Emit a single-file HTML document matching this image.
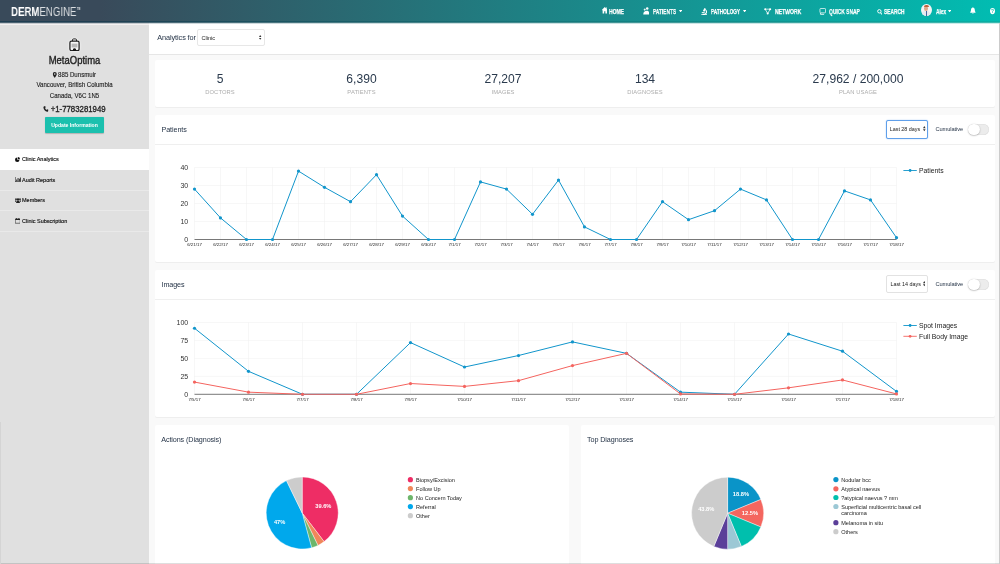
<!DOCTYPE html>
<html lang="en">
<head>
<meta charset="utf-8">
<title>DermEngine - Clinic Analytics</title>
<style>
*{box-sizing:border-box;margin:0;padding:0}
html,body{width:1000px;height:564px;overflow:hidden}
body{position:relative;background:#f9f9f9;font-family:"Liberation Sans",Arial,sans-serif;color:#333}
#app{position:absolute;left:0;top:0;width:1000px;height:564px;overflow:hidden;will-change:transform}
.abs{position:absolute}
#hdr{left:0;top:0;width:1000px;height:22px;background:linear-gradient(to right,#394a5a 0%,#394a5a 10%,#01bdb2 100%)}
#hdr:after{content:'';position:absolute;left:0;top:21px;width:1000px;height:1px;background:linear-gradient(to right,#1f3d50 0%,#1f3d50 10%,#09b0a4 100%)}
.hb{left:0;width:1000px;height:1px;background:linear-gradient(to right,#1f3d50 0%,#1f3d50 10%,#09a89c 100%)}
#hdr .logo{left:11px;top:4.7px;font-size:12px;line-height:14px;color:#fff;letter-spacing:0;white-space:nowrap;transform:scaleX(.805);transform-origin:0 0;will-change:transform}
#hdr .logo b{font-weight:bold}
#hdr .logo span{font-weight:normal;opacity:.82}
#hdr .logo sup{font-size:3px;line-height:3px;vertical-align:top;position:relative;top:2.8px;left:.6px;letter-spacing:0;opacity:.85;font-weight:bold}
.nt{top:6px;font-size:7.3px;line-height:11px;font-weight:bold;color:#fff;white-space:nowrap;transform:scaleX(var(--s));transform-origin:0 50%;-webkit-text-stroke:.25px #fff;will-change:transform}
#side{left:0;top:22px;width:149px;height:542px;background:#e0e0e0;border-top:3px solid #f4f1f1}
.sc{left:0;width:149px;text-align:center;white-space:nowrap;color:#1a1a1a;-webkit-text-stroke:.12px #1a1a1a}
.mi{left:0;width:149px;height:20.5px;line-height:21.5px;font-size:5.5px;color:#111;-webkit-text-stroke:.15px #111;padding-left:22px;white-space:nowrap}
.mi svg{position:absolute;left:14.5px;top:7.5px}
.card{background:#fff;border-radius:2px;box-shadow:0 1px 0 #eeeeee}
.ttl{font-size:7.2px;letter-spacing:-.09px;color:#1f2e42;white-space:nowrap;line-height:10px}
.stat{top:71px;width:142px;text-align:center}
.stat .n{font-size:12.1px;line-height:16px;color:#2a3a4d}
.stat .l{font-size:5.8px;line-height:8px;color:#adadad;margin-top:0.6px;letter-spacing:.1px}
.sel{background:#fff;border:1px solid #dcdcdc;border-radius:2px;font-size:5.6px;color:#222;white-space:nowrap}
.tog{width:20.6px;height:11.8px;border-radius:6px;background:#ececec;box-shadow:inset 0 0 0 .5px #ddd}
.tog i{position:absolute;left:0;top:0;width:11.8px;height:11.8px;border-radius:6px;background:#fff;box-shadow:0 .5px 1.5px rgba(0,0,0,.35)}
svg text{font-family:"Liberation Sans",Arial,sans-serif}
</style>
</head>
<body>
<div id="app">

<!-- main top bar -->
<div class="abs" style="left:149px;top:22px;width:851px;height:32.5px;background:#fff;border-bottom:1px solid #e6e6e6"></div>
<div class="abs ttl" style="left:157.3px;top:32.7px;font-size:7.3px">Analytics for</div>
<div class="abs sel" style="left:197.3px;top:28.9px;width:67.8px;height:17.2px;line-height:16px;padding-left:3.2px;border-color:#e7e7e7">Clinic
  <svg class="abs" style="right:2.6px;top:5.400px" width="2.400" height="4.800" viewBox="0 0 3 6"><path d="M0 2.400 L1.500 0 L3 2.400Z M0 3.600 L1.500 6 L3 3.600Z" fill="#333"/></svg>
</div>

<!-- stats card -->
<div class="abs card" style="left:155px;top:60px;width:840px;height:47px"></div>
<div class="abs stat" style="left:149px"><div class="n">5</div><div class="l">DOCTORS</div></div>
<div class="abs stat" style="left:290.5px"><div class="n">6,390</div><div class="l">PATIENTS</div></div>
<div class="abs stat" style="left:432px"><div class="n">27,207</div><div class="l">IMAGES</div></div>
<div class="abs stat" style="left:574px"><div class="n">134</div><div class="l">DIAGNOSES</div></div>
<div class="abs stat" style="left:716px;width:284px"><div class="n">27,962 / 200,000</div><div class="l">PLAN USAGE</div></div>

<!-- Patients card -->
<div class="abs card" style="left:155px;top:115px;width:840px;height:147px"></div>
<div class="abs" style="left:155px;top:144px;width:840px;height:1px;background:#efefef"></div>
<div class="abs ttl" style="left:161.5px;top:124.9px">Patients</div>
<div class="abs sel" style="left:886.2px;top:120px;width:42px;height:18.800px;line-height:17.600px;padding-left:2.500px;border:1.500px solid #5f9fea;box-shadow:0 0 1.200px #7db3f2;border-radius:2px;font-size:5.4px">Last 28 days
  <svg class="abs" style="right:1.200px;top:5.300px" width="2.600" height="5.400" viewBox="0 0 3 6"><path d="M0 2.400 L1.500 0 L3 2.400Z M0 3.600 L1.500 6 L3 3.600Z" fill="#333"/></svg>
</div>
<div class="abs ttl" style="left:935.5px;top:124px;font-size:5.7px">Cumulative</div>
<div class="abs tog" style="left:968.2px;top:123.6px"><i></i></div>

<!-- Images card -->
<div class="abs card" style="left:155px;top:270px;width:840px;height:146.5px"></div>
<div class="abs" style="left:155px;top:299px;width:840px;height:1px;background:#efefef"></div>
<div class="abs ttl" style="left:161.5px;top:279.9px">Images</div>
<div class="abs sel" style="left:886.4px;top:275.2px;width:41.4px;height:17.6px;line-height:17.600px;padding-left:3px;border:1px solid #e2e2e2;font-size:5.4px">Last 14 days
  <svg class="abs" style="right:1.600px;top:5.200px" width="2.600" height="5.400" viewBox="0 0 3 6"><path d="M0 2.400 L1.500 0 L3 2.400Z M0 3.600 L1.500 6 L3 3.600Z" fill="#333"/></svg>
</div>
<div class="abs ttl" style="left:935.5px;top:279px;font-size:5.7px">Cumulative</div>
<div class="abs tog" style="left:968.2px;top:278.6px"><i></i></div>

<!-- bottom cards -->
<div class="abs card" style="left:155px;top:424.5px;width:414px;height:145px"></div>
<div class="abs ttl" style="left:161.2px;top:434.6px">Actions (Diagnosis)</div>
<div class="abs card" style="left:581px;top:424.5px;width:414px;height:145px"></div>
<div class="abs ttl" style="left:587px;top:434.6px">Top Diagnoses</div>

<!-- charts -->
<svg class="abs" style="left:0;top:0" width="1000" height="564" viewBox="0 0 1000 564">
<line x1="194.5" y1="167.5" x2="194.5" y2="239.5" stroke="#eeeeee" stroke-width="0.5"/>
<line x1="220.5" y1="167.5" x2="220.5" y2="239.5" stroke="#eeeeee" stroke-width="0.5"/>
<line x1="246.5" y1="167.5" x2="246.5" y2="239.5" stroke="#eeeeee" stroke-width="0.5"/>
<line x1="272.5" y1="167.5" x2="272.5" y2="239.5" stroke="#eeeeee" stroke-width="0.5"/>
<line x1="298.5" y1="167.5" x2="298.5" y2="239.5" stroke="#eeeeee" stroke-width="0.5"/>
<line x1="324.5" y1="167.5" x2="324.5" y2="239.5" stroke="#eeeeee" stroke-width="0.5"/>
<line x1="350.5" y1="167.5" x2="350.5" y2="239.5" stroke="#eeeeee" stroke-width="0.5"/>
<line x1="376.5" y1="167.5" x2="376.5" y2="239.5" stroke="#eeeeee" stroke-width="0.5"/>
<line x1="402.5" y1="167.5" x2="402.5" y2="239.5" stroke="#eeeeee" stroke-width="0.5"/>
<line x1="428.5" y1="167.5" x2="428.5" y2="239.5" stroke="#eeeeee" stroke-width="0.5"/>
<line x1="454.5" y1="167.5" x2="454.5" y2="239.5" stroke="#eeeeee" stroke-width="0.5"/>
<line x1="480.5" y1="167.5" x2="480.5" y2="239.5" stroke="#eeeeee" stroke-width="0.5"/>
<line x1="506.5" y1="167.5" x2="506.5" y2="239.5" stroke="#eeeeee" stroke-width="0.5"/>
<line x1="532.5" y1="167.5" x2="532.5" y2="239.5" stroke="#eeeeee" stroke-width="0.5"/>
<line x1="558.5" y1="167.5" x2="558.5" y2="239.5" stroke="#eeeeee" stroke-width="0.5"/>
<line x1="584.5" y1="167.5" x2="584.5" y2="239.5" stroke="#eeeeee" stroke-width="0.5"/>
<line x1="610.5" y1="167.5" x2="610.5" y2="239.5" stroke="#eeeeee" stroke-width="0.5"/>
<line x1="636.5" y1="167.5" x2="636.5" y2="239.5" stroke="#eeeeee" stroke-width="0.5"/>
<line x1="662.5" y1="167.5" x2="662.5" y2="239.5" stroke="#eeeeee" stroke-width="0.5"/>
<line x1="688.5" y1="167.5" x2="688.5" y2="239.5" stroke="#eeeeee" stroke-width="0.5"/>
<line x1="714.5" y1="167.5" x2="714.5" y2="239.5" stroke="#eeeeee" stroke-width="0.5"/>
<line x1="740.5" y1="167.5" x2="740.5" y2="239.5" stroke="#eeeeee" stroke-width="0.5"/>
<line x1="766.5" y1="167.5" x2="766.5" y2="239.5" stroke="#eeeeee" stroke-width="0.5"/>
<line x1="792.5" y1="167.5" x2="792.5" y2="239.5" stroke="#eeeeee" stroke-width="0.5"/>
<line x1="818.5" y1="167.5" x2="818.5" y2="239.5" stroke="#eeeeee" stroke-width="0.5"/>
<line x1="844.5" y1="167.5" x2="844.5" y2="239.5" stroke="#eeeeee" stroke-width="0.5"/>
<line x1="870.5" y1="167.5" x2="870.5" y2="239.5" stroke="#eeeeee" stroke-width="0.5"/>
<line x1="896.5" y1="167.5" x2="896.5" y2="239.5" stroke="#eeeeee" stroke-width="0.5"/>
<text x="188.2" y="241.9" text-anchor="end" font-size="7" fill="#333">0</text>
<line x1="194.5" y1="221.5" x2="896.5" y2="221.5" stroke="#eeeeee" stroke-width="0.5"/>
<text x="188.2" y="223.9" text-anchor="end" font-size="7" fill="#333">10</text>
<line x1="194.5" y1="203.5" x2="896.5" y2="203.5" stroke="#eeeeee" stroke-width="0.5"/>
<text x="188.2" y="205.9" text-anchor="end" font-size="7" fill="#333">20</text>
<line x1="194.5" y1="185.5" x2="896.5" y2="185.5" stroke="#eeeeee" stroke-width="0.5"/>
<text x="188.2" y="187.9" text-anchor="end" font-size="7" fill="#333">30</text>
<line x1="194.5" y1="167.5" x2="896.5" y2="167.5" stroke="#eeeeee" stroke-width="0.5"/>
<text x="188.2" y="169.9" text-anchor="end" font-size="7" fill="#333">40</text>
<line x1="194.5" y1="239.5" x2="896.5" y2="239.5" stroke="#555" stroke-width="0.8"/>
<text x="194.5" y="245.8" text-anchor="middle" font-size="4.4" fill="#222">6/21/17</text>
<text x="220.5" y="245.8" text-anchor="middle" font-size="4.4" fill="#222">6/22/17</text>
<text x="246.5" y="245.8" text-anchor="middle" font-size="4.4" fill="#222">6/23/17</text>
<text x="272.5" y="245.8" text-anchor="middle" font-size="4.4" fill="#222">6/24/17</text>
<text x="298.5" y="245.8" text-anchor="middle" font-size="4.4" fill="#222">6/25/17</text>
<text x="324.5" y="245.8" text-anchor="middle" font-size="4.4" fill="#222">6/26/17</text>
<text x="350.5" y="245.8" text-anchor="middle" font-size="4.4" fill="#222">6/27/17</text>
<text x="376.5" y="245.8" text-anchor="middle" font-size="4.4" fill="#222">6/28/17</text>
<text x="402.5" y="245.8" text-anchor="middle" font-size="4.4" fill="#222">6/29/17</text>
<text x="428.5" y="245.8" text-anchor="middle" font-size="4.4" fill="#222">6/30/17</text>
<text x="454.5" y="245.8" text-anchor="middle" font-size="4.4" fill="#222">7/1/17</text>
<text x="480.5" y="245.8" text-anchor="middle" font-size="4.4" fill="#222">7/2/17</text>
<text x="506.5" y="245.8" text-anchor="middle" font-size="4.4" fill="#222">7/3/17</text>
<text x="532.5" y="245.8" text-anchor="middle" font-size="4.4" fill="#222">7/4/17</text>
<text x="558.5" y="245.8" text-anchor="middle" font-size="4.4" fill="#222">7/5/17</text>
<text x="584.5" y="245.8" text-anchor="middle" font-size="4.4" fill="#222">7/6/17</text>
<text x="610.5" y="245.8" text-anchor="middle" font-size="4.4" fill="#222">7/7/17</text>
<text x="636.5" y="245.8" text-anchor="middle" font-size="4.4" fill="#222">7/8/17</text>
<text x="662.5" y="245.8" text-anchor="middle" font-size="4.4" fill="#222">7/9/17</text>
<text x="688.5" y="245.8" text-anchor="middle" font-size="4.4" fill="#222">7/10/17</text>
<text x="714.5" y="245.8" text-anchor="middle" font-size="4.4" fill="#222">7/11/17</text>
<text x="740.5" y="245.8" text-anchor="middle" font-size="4.4" fill="#222">7/12/17</text>
<text x="766.5" y="245.8" text-anchor="middle" font-size="4.4" fill="#222">7/13/17</text>
<text x="792.5" y="245.8" text-anchor="middle" font-size="4.4" fill="#222">7/14/17</text>
<text x="818.5" y="245.8" text-anchor="middle" font-size="4.4" fill="#222">7/15/17</text>
<text x="844.5" y="245.8" text-anchor="middle" font-size="4.4" fill="#222">7/16/17</text>
<text x="870.5" y="245.8" text-anchor="middle" font-size="4.4" fill="#222">7/17/17</text>
<text x="896.5" y="245.8" text-anchor="middle" font-size="4.4" fill="#222">7/18/17</text>
<polyline points="194.5,189.1 220.5,217.9 246.5,239.5 272.5,239.5 298.5,171.1 324.5,187.3 350.5,201.7 376.5,174.7 402.5,216.1 428.5,239.5 454.5,239.5 480.5,181.9 506.5,189.1 532.5,214.3 558.5,180.1 584.5,226.9 610.5,239.5 636.5,239.5 662.5,201.7 688.5,219.7 714.5,210.7 740.5,189.1 766.5,199.9 792.5,239.5 818.5,239.5 844.5,190.9 870.5,199.9 896.5,237.7" fill="none" stroke="#1195cb" stroke-width="1" stroke-linejoin="round"/>
<circle cx="194.5" cy="189.1" r="1.6" fill="#1195cb"/>
<circle cx="220.5" cy="217.9" r="1.6" fill="#1195cb"/>
<circle cx="246.5" cy="239.5" r="1.6" fill="#1195cb"/>
<circle cx="272.5" cy="239.5" r="1.6" fill="#1195cb"/>
<circle cx="298.5" cy="171.1" r="1.6" fill="#1195cb"/>
<circle cx="324.5" cy="187.3" r="1.6" fill="#1195cb"/>
<circle cx="350.5" cy="201.7" r="1.6" fill="#1195cb"/>
<circle cx="376.5" cy="174.7" r="1.6" fill="#1195cb"/>
<circle cx="402.5" cy="216.1" r="1.6" fill="#1195cb"/>
<circle cx="428.5" cy="239.5" r="1.6" fill="#1195cb"/>
<circle cx="454.5" cy="239.5" r="1.6" fill="#1195cb"/>
<circle cx="480.5" cy="181.9" r="1.6" fill="#1195cb"/>
<circle cx="506.5" cy="189.1" r="1.6" fill="#1195cb"/>
<circle cx="532.5" cy="214.3" r="1.6" fill="#1195cb"/>
<circle cx="558.5" cy="180.1" r="1.6" fill="#1195cb"/>
<circle cx="584.5" cy="226.9" r="1.6" fill="#1195cb"/>
<circle cx="610.5" cy="239.5" r="1.6" fill="#1195cb"/>
<circle cx="636.5" cy="239.5" r="1.6" fill="#1195cb"/>
<circle cx="662.5" cy="201.7" r="1.6" fill="#1195cb"/>
<circle cx="688.5" cy="219.7" r="1.6" fill="#1195cb"/>
<circle cx="714.5" cy="210.7" r="1.6" fill="#1195cb"/>
<circle cx="740.5" cy="189.1" r="1.6" fill="#1195cb"/>
<circle cx="766.5" cy="199.9" r="1.6" fill="#1195cb"/>
<circle cx="792.5" cy="239.5" r="1.6" fill="#1195cb"/>
<circle cx="818.5" cy="239.5" r="1.6" fill="#1195cb"/>
<circle cx="844.5" cy="190.9" r="1.6" fill="#1195cb"/>
<circle cx="870.5" cy="199.9" r="1.6" fill="#1195cb"/>
<circle cx="896.5" cy="237.7" r="1.6" fill="#1195cb"/>
<line x1="903.4" y1="170.5" x2="916.8" y2="170.5" stroke="#1195cb" stroke-width="0.9"/><circle cx="910.1" cy="170.5" r="1.4" fill="#1195cb"/>
<text x="919" y="173" font-size="6.8" fill="#222">Patients</text>
<line x1="194.5" y1="322.5" x2="194.5" y2="394.3" stroke="#eeeeee" stroke-width="0.5"/>
<line x1="248.5" y1="322.5" x2="248.5" y2="394.3" stroke="#eeeeee" stroke-width="0.5"/>
<line x1="302.5" y1="322.5" x2="302.5" y2="394.3" stroke="#eeeeee" stroke-width="0.5"/>
<line x1="356.5" y1="322.5" x2="356.5" y2="394.3" stroke="#eeeeee" stroke-width="0.5"/>
<line x1="410.5" y1="322.5" x2="410.5" y2="394.3" stroke="#eeeeee" stroke-width="0.5"/>
<line x1="464.5" y1="322.5" x2="464.5" y2="394.3" stroke="#eeeeee" stroke-width="0.5"/>
<line x1="518.5" y1="322.5" x2="518.5" y2="394.3" stroke="#eeeeee" stroke-width="0.5"/>
<line x1="572.5" y1="322.5" x2="572.5" y2="394.3" stroke="#eeeeee" stroke-width="0.5"/>
<line x1="626.5" y1="322.5" x2="626.5" y2="394.3" stroke="#eeeeee" stroke-width="0.5"/>
<line x1="680.5" y1="322.5" x2="680.5" y2="394.3" stroke="#eeeeee" stroke-width="0.5"/>
<line x1="734.5" y1="322.5" x2="734.5" y2="394.3" stroke="#eeeeee" stroke-width="0.5"/>
<line x1="788.5" y1="322.5" x2="788.5" y2="394.3" stroke="#eeeeee" stroke-width="0.5"/>
<line x1="842.5" y1="322.5" x2="842.5" y2="394.3" stroke="#eeeeee" stroke-width="0.5"/>
<line x1="896.5" y1="322.5" x2="896.5" y2="394.3" stroke="#eeeeee" stroke-width="0.5"/>
<text x="188.2" y="396.7" text-anchor="end" font-size="7" fill="#333">0</text>
<line x1="194.5" y1="376.35" x2="896.5" y2="376.35" stroke="#eeeeee" stroke-width="0.5"/>
<text x="188.2" y="378.75" text-anchor="end" font-size="7" fill="#333">25</text>
<line x1="194.5" y1="358.4" x2="896.5" y2="358.4" stroke="#eeeeee" stroke-width="0.5"/>
<text x="188.2" y="360.8" text-anchor="end" font-size="7" fill="#333">50</text>
<line x1="194.5" y1="340.45" x2="896.5" y2="340.45" stroke="#eeeeee" stroke-width="0.5"/>
<text x="188.2" y="342.85" text-anchor="end" font-size="7" fill="#333">75</text>
<line x1="194.5" y1="322.5" x2="896.5" y2="322.5" stroke="#eeeeee" stroke-width="0.5"/>
<text x="188.2" y="324.9" text-anchor="end" font-size="7" fill="#333">100</text>
<line x1="194.5" y1="394.3" x2="896.5" y2="394.3" stroke="#555" stroke-width="0.8"/>
<text x="194.5" y="400.5" text-anchor="middle" font-size="4.4" fill="#222">7/5/17</text>
<text x="248.5" y="400.5" text-anchor="middle" font-size="4.4" fill="#222">7/6/17</text>
<text x="302.5" y="400.5" text-anchor="middle" font-size="4.4" fill="#222">7/7/17</text>
<text x="356.5" y="400.5" text-anchor="middle" font-size="4.4" fill="#222">7/8/17</text>
<text x="410.5" y="400.5" text-anchor="middle" font-size="4.4" fill="#222">7/9/17</text>
<text x="464.5" y="400.5" text-anchor="middle" font-size="4.4" fill="#222">7/10/17</text>
<text x="518.5" y="400.5" text-anchor="middle" font-size="4.4" fill="#222">7/11/17</text>
<text x="572.5" y="400.5" text-anchor="middle" font-size="4.4" fill="#222">7/12/17</text>
<text x="626.5" y="400.5" text-anchor="middle" font-size="4.4" fill="#222">7/13/17</text>
<text x="680.5" y="400.5" text-anchor="middle" font-size="4.4" fill="#222">7/14/17</text>
<text x="734.5" y="400.5" text-anchor="middle" font-size="4.4" fill="#222">7/15/17</text>
<text x="788.5" y="400.5" text-anchor="middle" font-size="4.4" fill="#222">7/16/17</text>
<text x="842.5" y="400.5" text-anchor="middle" font-size="4.4" fill="#222">7/17/17</text>
<text x="896.5" y="400.5" text-anchor="middle" font-size="4.4" fill="#222">7/18/17</text>
<polyline points="194.5,328.24 248.5,371.32 302.5,394.3 356.5,394.3 410.5,342.6 464.5,367.02 518.5,355.53 572.5,341.89 626.5,353.37 680.5,392.15 734.5,394.3 788.5,333.99 842.5,351.22 896.5,391.43" fill="none" stroke="#1195cb" stroke-width="1" stroke-linejoin="round"/>
<circle cx="194.5" cy="328.24" r="1.6" fill="#1195cb"/>
<circle cx="248.5" cy="371.32" r="1.6" fill="#1195cb"/>
<circle cx="302.5" cy="394.3" r="1.6" fill="#1195cb"/>
<circle cx="356.5" cy="394.3" r="1.6" fill="#1195cb"/>
<circle cx="410.5" cy="342.6" r="1.6" fill="#1195cb"/>
<circle cx="464.5" cy="367.02" r="1.6" fill="#1195cb"/>
<circle cx="518.5" cy="355.53" r="1.6" fill="#1195cb"/>
<circle cx="572.5" cy="341.89" r="1.6" fill="#1195cb"/>
<circle cx="626.5" cy="353.37" r="1.6" fill="#1195cb"/>
<circle cx="680.5" cy="392.15" r="1.6" fill="#1195cb"/>
<circle cx="734.5" cy="394.3" r="1.6" fill="#1195cb"/>
<circle cx="788.5" cy="333.99" r="1.6" fill="#1195cb"/>
<circle cx="842.5" cy="351.22" r="1.6" fill="#1195cb"/>
<circle cx="896.5" cy="391.43" r="1.6" fill="#1195cb"/>
<polyline points="194.5,382.09 248.5,392.15 302.5,394.3 356.5,394.3 410.5,383.53 464.5,386.4 518.5,380.66 572.5,365.58 626.5,353.37 680.5,393.94 734.5,394.3 788.5,387.84 842.5,379.94 896.5,393.94" fill="none" stroke="#f4645f" stroke-width="1" stroke-linejoin="round"/>
<circle cx="194.5" cy="382.09" r="1.6" fill="#f4645f"/>
<circle cx="248.5" cy="392.15" r="1.6" fill="#f4645f"/>
<circle cx="302.5" cy="394.3" r="1.6" fill="#f4645f"/>
<circle cx="356.5" cy="394.3" r="1.6" fill="#f4645f"/>
<circle cx="410.5" cy="383.53" r="1.6" fill="#f4645f"/>
<circle cx="464.5" cy="386.4" r="1.6" fill="#f4645f"/>
<circle cx="518.5" cy="380.66" r="1.6" fill="#f4645f"/>
<circle cx="572.5" cy="365.58" r="1.6" fill="#f4645f"/>
<circle cx="626.5" cy="353.37" r="1.6" fill="#f4645f"/>
<circle cx="680.5" cy="393.94" r="1.6" fill="#f4645f"/>
<circle cx="734.5" cy="394.3" r="1.6" fill="#f4645f"/>
<circle cx="788.5" cy="387.84" r="1.6" fill="#f4645f"/>
<circle cx="842.5" cy="379.94" r="1.6" fill="#f4645f"/>
<circle cx="896.5" cy="393.94" r="1.6" fill="#f4645f"/>
<line x1="903.4" y1="325.5" x2="916.8" y2="325.5" stroke="#1195cb" stroke-width="0.9"/><circle cx="910.1" cy="325.5" r="1.4" fill="#1195cb"/>
<text x="919" y="328" font-size="6.8" fill="#222">Spot Images</text>
<line x1="903.4" y1="336.3" x2="916.8" y2="336.3" stroke="#f4645f" stroke-width="0.9"/><circle cx="910.1" cy="336.3" r="1.4" fill="#f4645f"/>
<text x="919" y="338.8" font-size="6.8" fill="#222">Full Body Image</text>
<path d="M302.2,513 L302.2,477 A36,36 0 0 1 324.09,541.58 Z" fill="#ee2d65" stroke="#fff" stroke-width="0.4"/>
<path d="M302.2,513 L324.09,541.58 A36,36 0 0 1 317.94,545.38 Z" fill="#f0875a" stroke="#fff" stroke-width="0.4"/>
<path d="M302.2,513 L317.94,545.38 A36,36 0 0 1 311.59,547.75 Z" fill="#6db66b" stroke="#fff" stroke-width="0.4"/>
<path d="M302.2,513 L311.59,547.75 A36,36 0 0 1 286.46,480.62 Z" fill="#00a8ec" stroke="#fff" stroke-width="0.4"/>
<path d="M302.2,513 L286.46,480.62 A36,36 0 0 1 302.2,477 Z" fill="#cccccc" stroke="#fff" stroke-width="0.4"/>
<text x="323.3" y="508.2" text-anchor="middle" font-size="5.7" font-weight="bold" fill="#fff">39.6%</text>
<text x="279.6" y="524.2" text-anchor="middle" font-size="5.7" font-weight="bold" fill="#fff">47%</text>
<circle cx="410.4" cy="479.7" r="2.6" fill="#ee2d65"/>
<text x="416" y="481.8" font-size="5.55" fill="#1c1c1c">Biopsy/Excision</text>
<circle cx="410.4" cy="488.6" r="2.6" fill="#f0875a"/>
<text x="416" y="490.7" font-size="5.55" fill="#1c1c1c">Follow Up</text>
<circle cx="410.4" cy="497.7" r="2.6" fill="#6db66b"/>
<text x="416" y="499.8" font-size="5.55" fill="#1c1c1c">No Concern Today</text>
<circle cx="410.4" cy="506.6" r="2.6" fill="#00a8ec"/>
<text x="416" y="508.7" font-size="5.55" fill="#1c1c1c">Referral</text>
<circle cx="410.4" cy="515.7" r="2.6" fill="#cccccc"/>
<text x="416" y="517.8" font-size="5.55" fill="#1c1c1c">Other</text>
<path d="M727.6,513.2 L727.6,477.2 A36,36 0 0 1 760.86,499.42 Z" fill="#0a94c8" stroke="#fff" stroke-width="0.4"/>
<path d="M727.6,513.2 L760.86,499.42 A36,36 0 0 1 760.86,526.98 Z" fill="#f4665f" stroke="#fff" stroke-width="0.4"/>
<path d="M727.6,513.2 L760.86,526.98 A36,36 0 0 1 741.38,546.46 Z" fill="#00bfad" stroke="#fff" stroke-width="0.4"/>
<path d="M727.6,513.2 L741.38,546.46 A36,36 0 0 1 727.6,549.2 Z" fill="#9cc8d5" stroke="#fff" stroke-width="0.4"/>
<path d="M727.6,513.2 L727.6,549.2 A36,36 0 0 1 713.82,546.46 Z" fill="#5b3f99" stroke="#fff" stroke-width="0.4"/>
<path d="M727.6,513.2 L713.82,546.46 A36,36 0 0 1 727.6,477.2 Z" fill="#cccccc" stroke="#fff" stroke-width="0.4"/>
<text x="740.9" y="495.8" text-anchor="middle" font-size="5.7" font-weight="bold" fill="#fff">18.8%</text>
<text x="749.9" y="514.6" text-anchor="middle" font-size="5.7" font-weight="bold" fill="#fff">12.5%</text>
<text x="706.2" y="511.2" text-anchor="middle" font-size="5.7" font-weight="bold" fill="#fff">43.8%</text>
<circle cx="835.9" cy="479.6" r="2.6" fill="#0a94c8"/>
<text x="841.2" y="481.7" font-size="5.55" fill="#1c1c1c">Nodular bcc</text>
<circle cx="835.9" cy="488.8" r="2.6" fill="#f4665f"/>
<text x="841.2" y="490.9" font-size="5.55" fill="#1c1c1c">Atypical naevus</text>
<circle cx="835.9" cy="497.5" r="2.6" fill="#00bfad"/>
<text x="841.2" y="499.6" font-size="5.55" fill="#1c1c1c">?atypical naevus ? mm</text>
<circle cx="835.9" cy="506.5" r="2.6" fill="#9cc8d5"/>
<text x="841.2" y="508.6" font-size="5.55" fill="#1c1c1c">Superficial multicentric basal cell</text>
<text x="841.2" y="515.2" font-size="5.55" fill="#1c1c1c">carcinoma</text>
<circle cx="835.9" cy="522.7" r="2.6" fill="#5b3f99"/>
<text x="841.2" y="524.8" font-size="5.55" fill="#1c1c1c">Melanoma in situ</text>
<circle cx="835.9" cy="531.7" r="2.6" fill="#cccccc"/>
<text x="841.2" y="533.8" font-size="5.55" fill="#1c1c1c">Others</text>
</svg>

<!-- sidebar -->
<div id="side" class="abs"></div>
<svg class="abs" style="left:69.100px;top:37.800px;filter:drop-shadow(0 0 .8px #fff)" width="11" height="13.500" viewBox="0 0 24 30">
  <path d="M7.500 8 V4.500 a2.500 2.500 0 0 1 2.500-2.500 h4 a2.500 2.500 0 0 1 2.500 2.500 V8" fill="#f2f2f2" stroke="#222" stroke-width="2.200"/>
  <rect x="1.800" y="7.200" width="20.400" height="21" rx="3.500" fill="#f6f6f6" stroke="#222" stroke-width="2.800"/>
  <rect x="5.500" y="12.500" width="13" height="8.500" fill="#b9b9b9"/>
  <path d="M8 28.500 a4 5.500 0 0 1 8 0z" fill="#111"/>
</svg>
<div class="abs sc" style="top:54.9px;font-size:10.3px;line-height:12px;font-weight:normal;-webkit-text-stroke:.35px #222;color:#222;letter-spacing:0;transform:scaleX(.92)">MetaOptima</div>
<div class="abs sc" style="top:70px;font-size:6.85px;line-height:9px;transform:scaleX(.89)"><svg width="4.6" height="5.8" viewBox="0 0 8 12" preserveAspectRatio="none" style="vertical-align:-0.8px;margin-right:1.2px"><path d="M4 0a4 4 0 0 0-4 4c0 3 4 8 4 8s4-5 4-8a4 4 0 0 0-4-4zm0 5.6a1.6 1.6 0 1 1 0-3.2 1.6 1.6 0 0 1 0 3.2z" fill="#222"/></svg>885 Dunsmuir</div>
<div class="abs sc" style="top:79.7px;font-size:6.85px;line-height:9px;transform:scaleX(.89)">Vancouver, British Columbia</div>
<div class="abs sc" style="top:90.7px;font-size:6.85px;line-height:9px;transform:scaleX(.89)">Canada, V6C 1N5</div>
<div class="abs sc" style="top:103.7px;font-size:8.6px;line-height:11px;font-weight:normal;-webkit-text-stroke:.3px #222;letter-spacing:0;transform:scaleX(.91)"><svg width="6" height="6" viewBox="0 0 12 12" style="vertical-align:-0.5px;margin-right:2px"><path d="M2.6 0.6 L4.6 0.2 L5.6 3 L4.2 4 C4.8 5.6 6.4 7.2 8 7.8 L9 6.4 L11.8 7.4 L11.4 9.4 C11.2 10.6 10.2 11.6 9 11.4 C4.4 10.8 1.2 7.6 0.6 3 C0.4 1.8 1.4 0.8 2.6 0.6z" fill="#222"/></svg>+1-7783281949</div>
<div class="abs" style="left:45px;top:117px;width:59px;height:16px;background:#1bc0ae;border-radius:1px;color:#fff;font-size:5.1px;font-weight:bold;line-height:16px;text-align:center;white-space:nowrap;box-shadow:0 .5px 1px rgba(0,0,0,.2)">Update Information</div>

<div class="abs" style="left:0;top:149px;width:149px;height:20.5px;background:#fff"></div>
<div class="abs" style="left:0;top:189.5px;width:149px;height:1px;background:#e9e9e9"></div>
<div class="abs" style="left:0;top:210px;width:149px;height:1px;background:#e9e9e9"></div>
<div class="abs" style="left:0;top:230.5px;width:149px;height:1px;background:#e9e9e9"></div>
<div class="abs mi" style="top:149px"><svg width="5" height="5" viewBox="0 0 10 10"><path d="M4.500 1 V5.500 H9 A4.500 4.500 0 1 1 4.500 1z" fill="#111"/><path d="M5.700 0 A4.300 4.300 0 0 1 10 4.300 H5.700z" fill="#111"/></svg>Clinic Analytics</div>
<div class="abs mi" style="top:169.5px"><svg width="6" height="5" viewBox="0 0 12 10"><path d="M0 0h1v9h11v1H0z M2.5 5h1.8v3.4H2.5z M5.2 2h1.8v6.4H5.2z M7.9 3.6h1.8v4.8H7.9z M10.2 1h1.6v7.4h-1.6z" fill="#222"/></svg>Audit Reports</div>
<div class="abs mi" style="top:190px"><svg width="6" height="5" viewBox="0 0 12 10"><circle cx="6" cy="3" r="2.4" fill="#222"/><circle cx="2" cy="2.4" r="1.7" fill="#222"/><circle cx="10" cy="2.4" r="1.7" fill="#222"/><path d="M2.2 10 C2.2 7 3.6 5.6 6 5.6 S9.8 7 9.8 10z M0 7.4 C0 5.4 .8 4.6 2.4 4.6 L3 5.4 C2.2 6 1.8 6.8 1.8 7.4z M12 7.4 C12 5.4 11.2 4.6 9.6 4.6 L9 5.4 C9.8 6 10.2 6.8 10.2 7.4z" fill="#222"/></svg>Members</div>
<div class="abs mi" style="top:210.5px"><svg width="5.5" height="5.5" viewBox="0 0 11 11"><path d="M0.5 1.8h10v8.7h-10z" fill="none" stroke="#222" stroke-width="1.2"/><path d="M0.5 1.8h10v2.4h-10z M2.6 0h1.4v2.4H2.6z M7 0h1.4v2.4H7z" fill="#222"/></svg>Clinic Subscription</div>

<!-- header -->
<div id="hdr" class="abs">
  <div class="abs logo"><b>DERM</b><span>ENGINE</span><sup>TM</sup></div>
  <svg class="abs" style="left:601.6px;top:7.4px" width="5.6" height="6.6" viewBox="0 0 11 13"><path d="M5.5 0 L0 5.600 V6.600 H1.200 V13 H4.300 V8.600 H6.700 V13 H9.800 V6.600 H11 V5.600z M7.800 0.800h1.700v3l-1.700-1.700z" fill="#fff"/></svg>
  <span class="abs nt" style="left:609px;--s:.685">HOME</span>
  <svg class="abs" style="left:642.8px;top:7.4px" width="6.4" height="7.6" viewBox="0 0 13 15"><circle cx="8.600" cy="3" r="2.500" fill="#fff"/><path d="M0.500 15 C0.500 10 3.500 7.500 8 7.500 C11 7.500 12.500 9.500 12.500 12.500 V15z" fill="#fff"/><path d="M1.500 4.200h4.200v1.700H1.500z M2.750 2.900h1.700v4.300H2.750z" fill="#fff"/></svg>
  <span class="abs nt" style="left:653px;--s:.66">PATIENTS</span><svg class="abs" style="left:678.6px;top:9.900px" width="3.200" height="2.500" viewBox="0 0 32 25"><path d="M0 0H32L16 25z" fill="#fff"/></svg>
  <svg class="abs" style="left:700.8px;top:7.7px" width="6.400" height="7.800" viewBox="0 0 13 16"><path d="M7 0 L10.500 2 L7.300 7.900 L3.800 5.900z" fill="#fff"/><path d="M0.500 12.800h12v3H0.500z" fill="#fff"/><path d="M9.800 4.500 a5.200 5.200 0 0 1 -2.300 8.500 h-4" fill="none" stroke="#fff" stroke-width="2.400"/><path d="M1.500 9.500h6" stroke="#fff" stroke-width="2"/></svg>
  <span class="abs nt" style="left:711px;--s:.643">PATHOLOGY</span><svg class="abs" style="left:742.8px;top:9.900px" width="3.200" height="2.500" viewBox="0 0 32 25"><path d="M0 0H32L16 25z" fill="#fff"/></svg>
  <svg class="abs" style="left:764.3px;top:8px" width="7.400" height="6.800" viewBox="0 0 15 14"><circle cx="2.400" cy="2.400" r="2.100" fill="#fff"/><circle cx="12.600" cy="2.400" r="2.100" fill="#fff"/><circle cx="7.500" cy="11.500" r="2.100" fill="#fff"/><path d="M2.400 2.400H12.600L7.500 11.500z" fill="none" stroke="#fff" stroke-width="1.500"/></svg>
  <span class="abs nt" style="left:775px;--s:.695">NETWORK</span>
  <svg class="abs" style="left:819.4px;top:8.400px" width="6.800" height="6.800" viewBox="0 0 14 14"><path d="M3.500 1h8.500a1.500 1.500 0 0 1 1.500 1.500v6a1.500 1.500 0 0 1-1.500 1.500h-8.500a1.500 1.500 0 0 1-1.500-1.500v-6a1.500 1.500 0 0 1 1.500-1.500z" fill="none" stroke="#fff" stroke-width="1.500"/><path d="M3 10.500v2.500h7.500" fill="none" stroke="#fff" stroke-width="1.800"/></svg>
  <span class="abs nt" style="left:828.6px;--s:.672">QUICK SNAP</span>
  <svg class="abs" style="left:876.6px;top:8.800px" width="5.600" height="6" viewBox="0 0 11 12"><circle cx="4.600" cy="4.600" r="3.400" fill="none" stroke="#fff" stroke-width="1.900"/><path d="M7 7.400 L10 11" stroke="#fff" stroke-width="2.200"/></svg>
  <span class="abs nt" style="left:883.6px;--s:.665">SEARCH</span>
  <div class="abs" style="left:921px;top:4.300px;width:10.800px;height:12px;border-radius:50%;background:#f4f4f4;overflow:hidden">
    <div class="abs" style="left:3.300px;top:1.500px;width:4.200px;height:4.800px;border-radius:50%;background:#dfa98c"></div>
    <div class="abs" style="left:3.100px;top:.8px;width:4.600px;height:2.200px;border-radius:2.300px 2.300px 0 0;background:#c0613c"></div>
    <div class="abs" style="left:1.400px;top:6.600px;width:8px;height:6px;border-radius:3px 3px 0 0;background:#e6e9f0"></div>
    <div class="abs" style="left:4.700px;top:6.300px;width:1.400px;height:6px;background:#46679c"></div>
  </div>
  <span class="abs nt" style="left:935.5px;--s:.66">Alex</span><svg class="abs" style="left:947.8px;top:9.900px" width="3.200" height="2.500" viewBox="0 0 32 25"><path d="M0 0H32L16 25z" fill="#fff"/></svg>
  <svg class="abs" style="left:970.4px;top:7.400px" width="5.800" height="7.200" viewBox="0 0 12 15"><path d="M6 0.300 C5.300 0.300 4.900 0.800 4.900 1.500 C3 2.100 2 4 2 6 C2 9 0.500 10 0.300 11.800 H11.700 C11.500 10 10 9 10 6 C10 4 9 2.100 7.100 1.500 C7.100 0.800 6.700 0.300 6 0.300z M4.400 12.800 a1.700 1.700 0 0 0 3.200 0z" fill="#fff"/></svg>
  <svg class="abs" style="left:989.8px;top:8.400px" width="5" height="6.200" viewBox="0 0 10 12.400"><ellipse cx="5" cy="6.200" rx="5" ry="6.200" fill="#fff"/><text x="5" y="9.800" text-anchor="middle" font-size="9.500" font-weight="bold" fill="#0bb8a9">?</text></svg>
</div>

<div class="abs hb" style="top:22px;opacity:.8"></div>
<div class="abs hb" style="top:23px;opacity:.22"></div>
<!-- bottom edge line -->
<div class="abs" style="left:0;top:562.7px;width:1000px;height:1.3px;background:rgba(0,0,0,.13)"></div>
<div class="abs" style="left:999px;top:23px;width:1px;height:541px;background:#cbcbcb"></div>
<div class="abs" style="left:0;top:422px;width:1px;height:142px;background:#d4d4d4"></div>
</div>
</body>
</html>
